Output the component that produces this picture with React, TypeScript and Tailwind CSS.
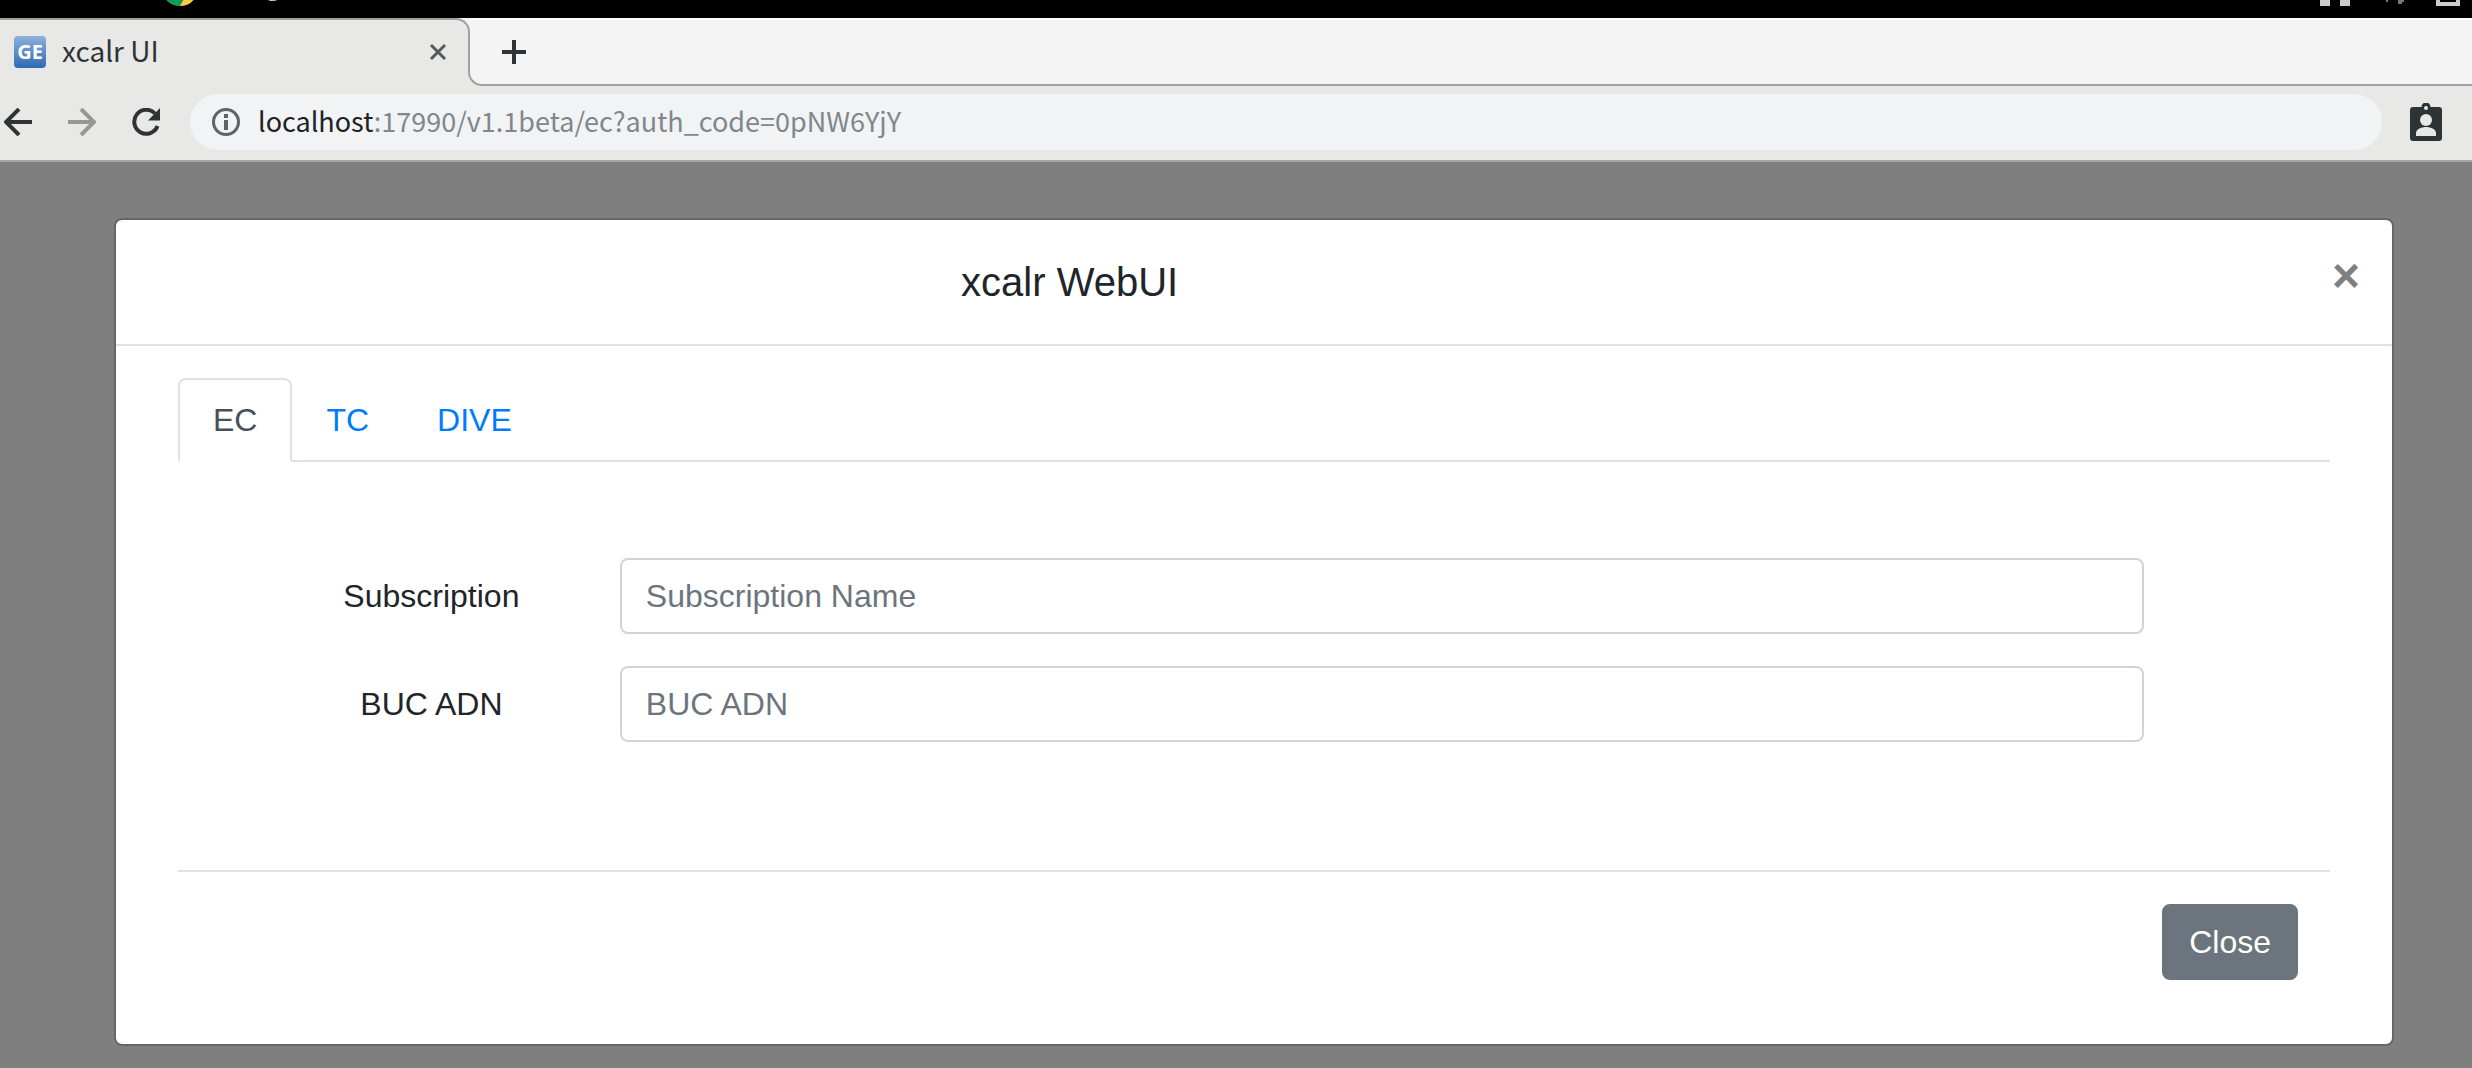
import React from "react";

const TABS = ["EC", "TC", "DIVE"];

const FIELDS = [
  { id: "subscription", label: "Subscription", placeholder: "Subscription Name" },
  { id: "buc-adn", label: "BUC ADN", placeholder: "BUC ADN" },
];

function SystemBar() {
  return (
    <div className="flex h-[18px] items-end justify-between overflow-hidden bg-black pr-3 pl-[162px] text-[#d0d0d0]">
      <div className="flex items-end gap-4">
        <svg className="mb-3 h-9 w-9" viewBox="0 0 36 36" aria-hidden="true">
          <circle cx="18" cy="18" r="18" fill="#db4437" />
          <path d="M18 18 2.4 9A18 18 0 0 0 18 36l8-14z" fill="#0f9d58" />
          <path d="M18 36A18 18 0 0 0 33.6 9H18l8 13z" fill="#ffcd40" />
          <circle cx="18" cy="18" r="8" fill="#4285f4" stroke="#f1f1f1" strokeWidth="2" />
        </svg>
        <span className="mb-4 text-[26px] leading-9 font-bold">Google Chrome</span>
      </div>
      <svg className="h-[18px] w-[140px]" viewBox="0 0 140 18" fill="#cccccc" aria-hidden="true">
        <path d="M0 0h10v6H0zM20 0h10v6H20z" />
        <path d="M66 0h2v2h-2zM78 0h6v2h-2v2h-4z" fill="#777" />
        <path d="M116 0h24v6h-24zM120 0v2h16V0z" fillRule="evenodd" />
      </svg>
    </div>
  );
}

/* The S-shaped outline that joins the active tab to the toolbar edge. */
function TabEdge() {
  return (
    <div className="flex w-[30px] flex-col">
      <div className="flex h-1/2 bg-[#f4f4f4]">
        <div className="w-4 rounded-tr-[14px] border-t-2 border-r-2 border-[#a0a0a0] bg-[#e8e8e6]" />
        <div className="flex-1 border-t-2 border-white" />
      </div>
      <div className="flex h-1/2 justify-end bg-[#e8e8e6]">
        <div className="w-4 rounded-bl-[14px] border-b-2 border-l-2 border-[#a0a0a0] bg-[#f4f4f4]" />
      </div>
    </div>
  );
}

function BrowserTabs() {
  return (
    <div className="flex h-[68px]">
      <div className="flex w-[454px] items-center border-t-2 border-[#a0a0a0] bg-[#e8e8e6] pb-[2px] pl-[14px]">
        <span className="flex h-8 w-8 items-center justify-center rounded-sm bg-linear-to-b from-[#8fb0dc] to-[#2f69b3] font-['Noto_Sans',sans-serif] text-[20px] leading-8 font-bold text-white">
          GE
        </span>
        <span className="ml-4 flex-1 pb-1 text-[28px] leading-9 text-[#2e3436]">xcalr UI</span>
        <button type="button" aria-label="Close tab" className="mr-[7px] text-[#555a5c]">
          <svg className="h-[18px] w-[18px]" viewBox="0 0 18 18" fill="none" stroke="currentColor" strokeWidth="3">
            <path d="M2 2 16 16M16 2 2 16" />
          </svg>
        </button>
      </div>
      <TabEdge />
      <div className="flex flex-1 items-center border-t-2 border-b-2 border-t-white border-b-[#a0a0a0] bg-[#f4f4f4] pl-[18px]">
        <button type="button" aria-label="New tab" className="text-[#2e3436]">
          <svg className="h-6 w-6" viewBox="0 0 24 24" fill="none" stroke="currentColor" strokeWidth="4">
            <path d="M12 0v24M0 12h24" />
          </svg>
        </button>
      </div>
    </div>
  );
}

function Toolbar() {
  return (
    <div className="flex h-[76px] items-center border-b-2 border-[#a6a8a0] bg-[#e8e8e6] pr-[30px] pb-[2px] pl-1 text-[#2e3436]">
      <button type="button" aria-label="Back">
        <svg className="h-7 w-7" viewBox="0 0 28 28" fill="none" stroke="currentColor" strokeWidth="4">
          <path d="M28 14H3M15 1 2 14l13 13" />
        </svg>
      </button>
      <button type="button" aria-label="Forward" className="ml-9 text-[#969896]">
        <svg className="h-7 w-7" viewBox="0 0 28 28" fill="none" stroke="currentColor" strokeWidth="4">
          <path d="M0 14h25M13 1l13 13-13 13" />
        </svg>
      </button>
      <button type="button" aria-label="Reload" className="ml-9">
        <svg className="h-7 w-7" viewBox="0 0 28 28" aria-hidden="true">
          <path d="M25.500 18A12 12 0 1 1 23 5.500" fill="none" stroke="currentColor" strokeWidth="4" />
          <path d="M28 0v12.500H16z" fill="currentColor" />
        </svg>
      </button>
      <div className="ml-[30px] flex h-14 flex-1 items-center rounded-full bg-[#f1f3f5] pl-[22px]">
        <svg className="h-7 w-7 text-[#5f6368]" viewBox="0 0 28 28" aria-hidden="true">
          <circle cx="14" cy="14" r="12.500" fill="none" stroke="currentColor" strokeWidth="3" />
          <path d="M12 12h4v10h-4zM12 6h4v4h-4z" fill="currentColor" />
        </svg>
        <p className="ml-[18px] pb-[2px] text-[27px] leading-9 text-[#80868b]">
          <span className="text-[#202124]">localhost</span>:17990/v1.1beta/ec?auth_code=0pNW6YjY
        </p>
      </div>
      <button type="button" aria-label="Profile" className="ml-7">
        <svg className="h-[38px] w-8" viewBox="0 0 32 38" aria-hidden="true">
          <path
            d="M3 4h8.500a4.500 4.500 0 0 1 9 0H29a3 3 0 0 1 3 3v28a3 3 0 0 1-3 3H3a3 3 0 0 1-3-3V7a3 3 0 0 1 3-3z"
            fill="currentColor"
          />
          <circle cx="16" cy="5" r="2" fill="#e8e8e6" />
          <circle cx="16" cy="17" r="6" fill="#e8e8e6" />
          <path d="M6 33v-3c0-4 6-6 10-6s10 2 10 6v3z" fill="#e8e8e6" />
        </svg>
      </button>
    </div>
  );
}

function Dialog() {
  return (
    <div
      role="dialog"
      aria-labelledby="dialog-title"
      className="rounded-lg border-2 border-[#666666] bg-white font-['Liberation_Sans',Arial,sans-serif] text-[32px] leading-[48px] text-[#212529]"
    >
      <div className="flex items-start justify-between border-b-2 border-[#dee2e6] p-8">
        <h1 id="dialog-title" className="w-5/6 text-center text-[40px] leading-[60px]">
          xcalr WebUI
        </h1>
        <button type="button" aria-label="Close dialog" className="text-[48px] leading-[48px] font-bold text-[#7f7f7f]">
          ×
        </button>
      </div>

      <div className="px-[62px] pt-8 pb-16">
        <div role="tablist" className="flex border-b-2 border-[#dee2e6]">
          {TABS.map((tab, i) => (
            <button
              key={tab}
              type="button"
              role="tab"
              aria-selected={i === 0}
              className={
                i === 0
                  ? "-mb-[2px] rounded-t-lg border-2 border-[#dee2e6] border-b-white bg-white px-[33px] py-4 text-[#495057]"
                  : "-mb-[2px] border-2 border-transparent px-8 py-4 text-[#007bff]"
              }
            >
              {tab}
            </button>
          ))}
        </div>

        <form className="flex flex-col gap-8 pt-24 pr-[156px] pb-32 pl-[95px]">
          {FIELDS.map((field) => (
            <div key={field.id} className="flex items-center">
              <label htmlFor={field.id} className="w-1/6 text-center">
                {field.label}
              </label>
              <div className="w-5/6 px-[30px]">
                <input
                  id={field.id}
                  type="text"
                  placeholder={field.placeholder}
                  className="block h-[76px] w-full rounded-lg border-2 border-[#ced4da] bg-white px-6 py-3 placeholder:text-[#6c757d]"
                />
              </div>
            </div>
          ))}
        </form>

        <div className="flex justify-end border-t-2 border-[#dee2e6] px-8 pt-8">
          <button type="button" className="rounded-lg border-2 border-[#6c757d] bg-[#6c757d] px-[25px] py-3 text-white">
            Close
          </button>
        </div>
      </div>
    </div>
  );
}

export default function App() {
  return (
    <div className="min-h-screen bg-[#7f7f7f] font-['Noto_Sans_CJK_SC','Noto_Sans',sans-serif]">
      <SystemBar />
      <header>
        <BrowserTabs />
        <Toolbar />
      </header>
      <main className="pt-14 pr-[78px] pb-[22px] pl-[114px]">
        <Dialog />
      </main>
    </div>
  );
}
